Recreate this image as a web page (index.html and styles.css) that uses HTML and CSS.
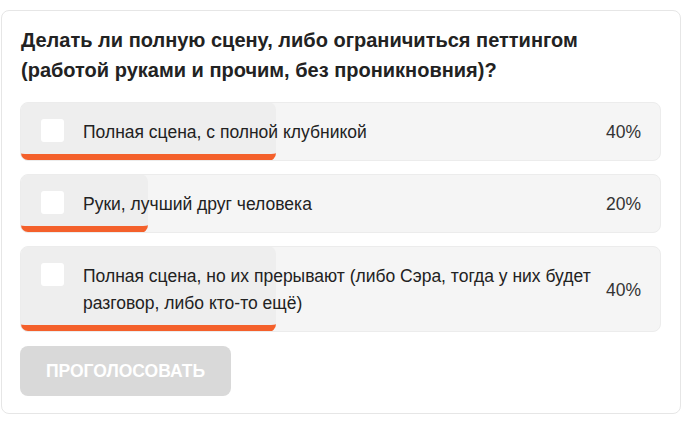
FILE: index.html
```html
<!DOCTYPE html>
<html lang="ru">
<head>
<meta charset="utf-8">
<title>Опрос</title>
<link rel="stylesheet" href="styles.css">
</head>
<body>
<div class="card">
  <h2 class="title">Делать ли полную сцену, либо ограничиться петтингом<br>(работой руками и прочим, без проникновния)?</h2>
  <div class="options">
    <div class="option">
      <div class="fill" style="width:40%"></div>
      <span class="check"></span>
      <span class="label">Полная сцена, с полной клубникой</span>
      <span class="pct">40%</span>
    </div>
    <div class="option">
      <div class="fill" style="width:20%"></div>
      <span class="check"></span>
      <span class="label">Руки, лучший друг человека</span>
      <span class="pct">20%</span>
    </div>
    <div class="option">
      <div class="fill" style="width:40%"></div>
      <span class="check"></span>
      <span class="label">Полная сцена, но их прерывают (либо Сэра, тогда у них будет разговор, либо кто-то ещё)</span>
      <span class="pct">40%</span>
    </div>
  </div>
  <button class="vote" type="button">Проголосовать</button>
</div>
</body>
</html>
```

FILE: styles.css
```css
* { box-sizing: border-box; }
html, body { margin: 0; padding: 0; background: #ffffff; }
body {
  padding: 10px 6px 0 1px;
  font-family: "Liberation Sans", Arial, sans-serif;
  color: #222222;
}
.card {
  width: 680px;
  border: 1px solid #e6e6e6;
  border-radius: 8px;
  padding: 14px 19px 17px 18px;
}
.title {
  margin: 0 0 17px 1px;
  font-size: 20px;
  line-height: 30px;
  font-weight: bold;
  color: #222222;
}
.options {
  display: flex;
  flex-direction: column;
  gap: 13px;
}
.option {
  position: relative;
  display: flex;
  align-items: flex-start;
  background: #f5f5f5;
  border: 1px solid #ececec;
  border-radius: 8px;
  padding: 16px 19px 14px 20px;
  overflow: hidden;
}
.fill {
  position: absolute;
  left: -1px;
  top: -1px;
  bottom: -1px;
  background: #eeeeee;
  border-bottom: 7px solid #f4602b;
  border-radius: 8px;
}
.check {
  position: relative;
  flex: none;
  width: 23px;
  height: 23px;
  background: #ffffff;
  border-radius: 3px;
}
.label {
  position: relative;
  flex: 1;
  margin-left: 19px;
  font-size: 17.5px;
  line-height: 27px;
  color: #222222;
}
.pct {
  position: relative;
  flex: none;
  align-self: center;
  margin-left: 8px;
  font-size: 17.5px;
  line-height: 27px;
  color: #333333;
}
.vote {
  display: block;
  margin: 14px 0 0 0;
  width: 211px;
  height: 50px;
  border: none;
  border-radius: 8px;
  background: #d9d9d9;
  color: #ffffff;
  font-family: "Liberation Sans", Arial, sans-serif;
  font-size: 17.5px;
  font-weight: bold;
  text-transform: uppercase;
  padding: 0;
}
```
